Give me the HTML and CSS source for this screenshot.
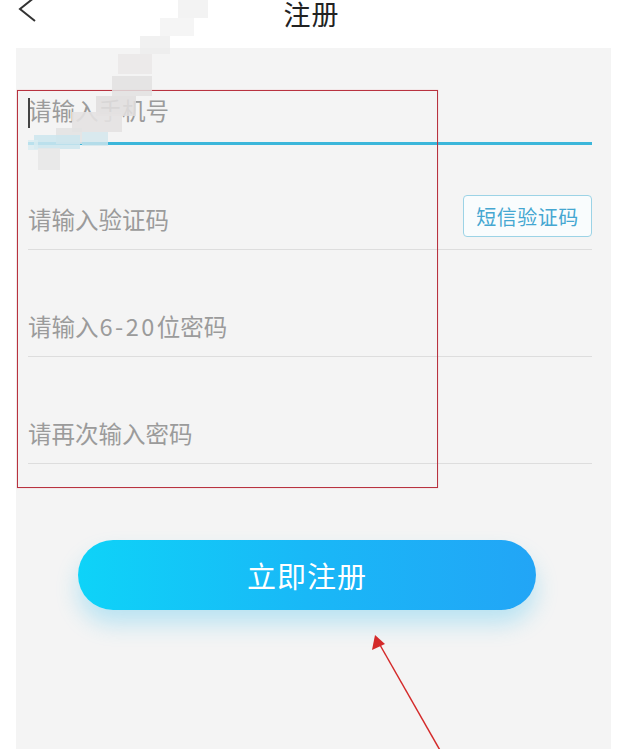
FILE: index.html
```html
<!DOCTYPE html>
<html lang="zh-CN">
<head>
<meta charset="utf-8">
<title>注册</title>
<link rel="stylesheet" href="styles.css">
</head>
<body>
<div class="page">
  <header class="topbar">
    <svg class="back" width="20" height="30" viewBox="0 0 20 30"><polyline points="17,1 2,13 17,25" fill="none" stroke="#333" stroke-width="2"/></svg>
    <h1 class="title">注册</h1>
  </header>
  <main class="panel">
    <form class="form">
      <div class="row row-first active">
        <span class="cursor"></span>
        <span class="ph">请输入手机号</span>
      </div>
      <div class="row">
        <span class="ph">请输入验证码</span>
        <button type="button" class="sms">短信验证码</button>
      </div>
      <div class="row">
        <span class="ph">请输入<span class="num">6-20</span>位密码</span>
      </div>
      <div class="row">
        <span class="ph">请再次输入密码</span>
      </div>
    </form>
    <div class="submit-wrap">
      <button type="button" class="submit">立即注册</button>
    </div>
  </main>

  <div class="annot-box"></div>
  <div class="mosaic">
    <span class="m m1"></span><span class="m m2"></span><span class="m m3"></span>
    <span class="m m4"></span><span class="m m5"></span><span class="m m6"></span>
    <span class="m m7"></span><span class="m m8"></span><span class="m m9"></span>
    <span class="m m10"></span><span class="m m11"></span><span class="m m12"></span>
  </div>
  <svg class="arrow" width="617" height="749" viewBox="0 0 617 749">
    <line x1="441" y1="752" x2="380" y2="645" stroke="#d42a2a" stroke-width="1.5"/>
    <polygon points="375,635 372,650 385,644" fill="#d42a2a"/>
  </svg>
</div>
</body>
</html>
```

FILE: styles.css
```css
html, body {
  margin: 0;
  padding: 0;
  background: #ffffff;
}
body {
  font-family: "Noto Sans CJK SC", "Noto Sans", sans-serif;
  width: 617px;
  height: 749px;
  overflow: hidden;
}
.page {
  position: relative;
  width: 617px;
  height: 749px;
  display: flex;
  flex-direction: column;
}
.topbar {
  height: 48px;
  flex: none;
  display: flex;
  justify-content: center;
  position: relative;
}
.back {
  position: absolute;
  left: 18px;
  top: -4px;
}
.title {
  margin: 0 0 0 6px;
  font-size: 27px;
  font-weight: 400;
  line-height: 27px;
  color: #222;
  letter-spacing: 1px;
}
.panel {
  flex: 1;
  margin-left: 16px;
  width: 595px;
  background: #f4f4f4;
}
.form {
  padding: 0 19px 0 12px;
  display: flex;
  flex-direction: column;
}
.row {
  height: 107px;
  box-sizing: border-box;
  border-bottom: 1px solid #dddddd;
  display: flex;
  align-items: flex-end;
  justify-content: space-between;
  padding-bottom: 15px;
  position: relative;
}
.row-first {
  height: 97px;
  border-bottom: 3px solid #3bb6da;
  padding-bottom: 17px;
}
.row:nth-child(2) {
  height: 105px;
}
.ph {
  font-size: 23.5px;
  line-height: 30px;
  color: #9b9b9b;
}
.num {
  letter-spacing: 2.5px;
  margin-left: 1px;
}
.cursor {
  position: absolute;
  left: 0;
  top: 50px;
  width: 2px;
  height: 30px;
  background: #444;
}
.sms {
  align-self: flex-end;
  margin-bottom: -3px;
  width: 129px;
  height: 42px;
  border: 1.5px solid #9cd3e6;
  border-radius: 4px;
  background: #f9fcfd;
  color: #45a7d1;
  font-family: inherit;
  font-size: 20px;
  padding: 0;
  letter-spacing: 0.5px;
}
.submit-wrap {
  padding: 76px 0 0 62px;
}
.submit {
  width: 458px;
  height: 70px;
  border: none;
  border-radius: 35px;
  background: linear-gradient(90deg, #0ed3f8 0%, #19b8f7 50%, #22a5f6 100%);
  color: #ffffff;
  font-family: inherit;
  font-size: 29px;
  letter-spacing: 1px;
  box-shadow: 0 14px 22px rgba(40, 185, 240, 0.28);
  padding: 0;
}
.annot-box {
  position: absolute;
  left: 17px;
  top: 90px;
  width: 419px;
  height: 396px;
  border: 1px solid #b8323f;
  box-shadow: 0 0 1px rgba(230, 100, 110, 0.5);
  pointer-events: none;
}
.mosaic {
  position: absolute;
  left: 0;
  top: 0;
  pointer-events: none;
}
.m {
  position: absolute;
  width: 18px;
  height: 18px;
  background: rgba(225, 225, 225, 0.8);
}
.m1 { left: 178px; top: 0; background: rgba(240, 240, 240, 0.8); width: 30px; }
.m2 { left: 160px; top: 18px; background: rgba(242, 242, 242, 0.75); width: 34px; }
.m3 { left: 140px; top: 36px; background: rgba(236, 236, 236, 0.75); width: 30px; }
.m4 { left: 118px; top: 54px; background: rgba(232, 230, 230, 0.7); width: 34px; height: 20px; }
.m5 { left: 112px; top: 76px; background: rgba(226, 224, 224, 0.85); width: 40px; height: 20px; }
.m6 { left: 96px; top: 96px; background: rgba(224, 222, 222, 0.88); width: 40px; height: 20px; }
.m7 { left: 72px; top: 112px; background: rgba(228, 226, 226, 0.9); width: 50px; height: 20px; }
.m8 { left: 56px; top: 128px; background: rgba(226, 226, 226, 0.88); width: 26px; height: 16px; }
.m9 { left: 34px; top: 135px; background: rgba(205, 230, 238, 0.88); width: 46px; height: 14px; }
.m10 { left: 38px; top: 148px; background: rgba(230, 230, 230, 0.85); width: 22px; height: 22px; }
.m11 { left: 82px; top: 132px; background: rgba(210, 230, 236, 0.8); width: 26px; height: 14px; }
.m12 { left: 28px; top: 140px; background: rgba(218, 236, 241, 0.8); width: 10px; height: 10px; }
.arrow {
  position: absolute;
  left: 0;
  top: 0;
  pointer-events: none;
}
```
